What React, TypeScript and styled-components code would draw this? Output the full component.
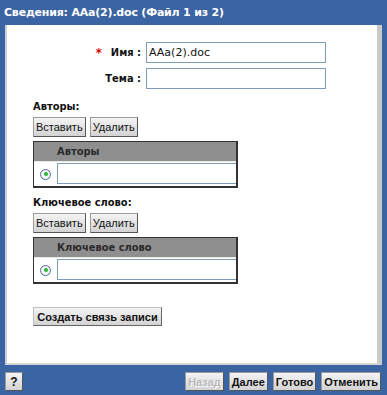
import React from 'react';
import styled, { createGlobalStyle } from 'styled-components';

const GlobalStyle = createGlobalStyle`
  html, body {
    margin: 0;
    padding: 0;
    background: #3b64a2;
  }
`;

const Frame = styled.div`
  width: 387px;
  height: 395px;
  background: #3b64a2;
  display: flex;
  flex-direction: column;
  font-family: 'DejaVu Sans', Verdana, sans-serif;
  overflow: hidden;
`;

const TitleBar = styled.div`
  height: 25px;
  padding-left: 4px;
  color: #fff;
  font-family: 'DejaVu Sans', sans-serif;
  font-weight: bold;
  font-size: 11px;
  line-height: 25px;
  letter-spacing: -0.2px;
  box-sizing: border-box;
`;

const Panel = styled.div`
  margin: 0 5px 0 5px;
  height: 340px;
  background: #fff;
  border-left: 2px solid #cfd3d9;
  border-right: 5px solid #c9c9c9;
  border-bottom: 2px solid #d6d6d6;
  box-sizing: border-box;
  padding: 17px 0 0 26px;
`;

const FormGrid = styled.div`
  display: grid;
  grid-template-columns: 108px 180px;
  column-gap: 5px;
  row-gap: 5px;
  align-items: center;
`;

const Label = styled.div`
  display: flex;
  justify-content: flex-end;
  align-items: center;
  gap: 9px;
  font-size: 11px;
  font-weight: bold;
  color: #111;
  font-family: 'DejaVu Sans Condensed', 'DejaVu Sans', sans-serif;
`;

const Star = styled.span`
  color: #e00000;
  font-size: 13px;
`;

const TextInput = styled.div`
  height: 21px;
  box-sizing: border-box;
  border: 1px solid #7f9db9;
  font-size: 11px;
  font-family: 'DejaVu Sans', sans-serif;
  line-height: 19px;
  padding-left: 2px;
  color: #111;
`;

const SectionTitle = styled.div<{ $top: number }>`
  margin-top: ${(p) => p.$top}px;
  font-size: 11px;
  font-weight: bold;
  color: #111;
  font-family: 'DejaVu Sans Condensed', 'DejaVu Sans', sans-serif;
  height: 14px;
  line-height: 14px;
`;

const ButtonRow = styled.div`
  display: flex;
  gap: 4px;
  margin-top: 3px;
`;

const Button = styled.div<{ $bold?: boolean; $disabled?: boolean }>`
  height: 20px;
  box-sizing: border-box;
  padding: 0 2px;
  border: 1px solid #9a9a9a;
  border-right-color: #555;
  border-bottom-color: #555;
  background: linear-gradient(#f4f4f4, #d3d3d3);
  font-size: 11px;
  font-weight: ${(p) => (p.$bold ? 'bold' : 'normal')};
  font-family: 'Liberation Sans', Arial, sans-serif;
  color: ${(p) => (p.$disabled ? '#b8b8b8' : '#111')};
  text-shadow: ${(p) => (p.$disabled ? '1px 1px 0 #fff' : 'none')};
  line-height: 18px;
  white-space: nowrap;
`;

const Table = styled.div`
  margin-top: 4px;
  width: 205px;
  border: 1px solid #333;
  border-right-width: 2px;
  border-bottom-width: 2px;
  box-sizing: border-box;
`;

const TableHead = styled.div`
  height: 19px;
  background: #8f8f8f;
  border-bottom: 1px solid #e8e8e8;
  padding-left: 23px;
  font-size: 11px;
  font-weight: bold;
  color: #2a2a2a;
  line-height: 19px;
  font-family: 'DejaVu Sans Condensed', 'DejaVu Sans', sans-serif;
`;

const TableRow = styled.div`
  display: flex;
  align-items: center;
  height: 24px;
  background: #fff;
`;

const RadioCell = styled.div`
  width: 23px;
  display: flex;
  justify-content: center;
`;

const Radio = styled.div`
  width: 11px;
  height: 11px;
  border-radius: 50%;
  border: 1px solid #4a6d96;
  box-sizing: border-box;
  background: #f3f5f8;
  display: flex;
  align-items: center;
  justify-content: center;
  &::after {
    content: '';
    width: 4px;
    height: 4px;
    border-radius: 50%;
    background: #27b431;
  }
`;

const RowInput = styled.div`
  flex: 1;
  height: 21px;
  margin-top: -2px;
  box-sizing: border-box;
  border: 1px solid #7f9db9;
  border-right: none;
`;

const BigButton = styled(Button)`
  margin-top: 23px;
  width: 129px;
  height: 19px;
  font-weight: bold;
  padding: 0;
  text-align: center;
  border-color: #c0c0c0 #666 #666 #c0c0c0;
`;

const Footer = styled.div`
  display: flex;
  align-items: center;
  padding: 7px 6px 0 5px;
`;

const Spacer = styled.div`
  flex: 1;
`;

const FooterButtons = styled.div`
  display: flex;
  gap: 5px;
`;

const FooterButton = styled(Button)`
  height: 19px;
  padding: 0 2px;
  font-size: 11px;
`;

const HelpButton = styled(Button)`
  width: 18px;
  height: 19px;
  padding: 0;
  text-align: center;
  font-weight: bold;
  font-size: 12px;
`;

const TableBlock = ({ title }: { title: string }) => (
  <>
    <ButtonRow>
      <Button>Вставить</Button>
      <Button>Удалить</Button>
    </ButtonRow>
    <Table>
      <TableHead>{title}</TableHead>
      <TableRow>
        <RadioCell>
          <Radio />
        </RadioCell>
        <RowInput />
      </TableRow>
    </Table>
  </>
);

export default function App() {
  return (
    <>
      <GlobalStyle />
      <Frame>
        <TitleBar>Сведения: AAa(2).doc (Файл 1 из 2)</TitleBar>
        <Panel>
          <FormGrid>
            <Label>
              <Star>*</Star>
              <span>Имя :</span>
            </Label>
            <TextInput>AAa(2).doc</TextInput>
            <Label>
              <span>Тема :</span>
            </Label>
            <TextInput />
          </FormGrid>
          <SectionTitle $top={11}>Авторы:</SectionTitle>
          <TableBlock title="Авторы" />
          <SectionTitle $top={8}>Ключевое слово:</SectionTitle>
          <TableBlock title="Ключевое слово" />
          <BigButton>Создать связь записи</BigButton>
        </Panel>
        <Footer>
          <HelpButton>?</HelpButton>
          <Spacer />
          <FooterButtons>
            <FooterButton $bold $disabled>
              Назад
            </FooterButton>
            <FooterButton $bold>Далее</FooterButton>
            <FooterButton $bold>Готово</FooterButton>
            <FooterButton $bold>Отменить</FooterButton>
          </FooterButtons>
        </Footer>
      </Frame>
    </>
  );
}
